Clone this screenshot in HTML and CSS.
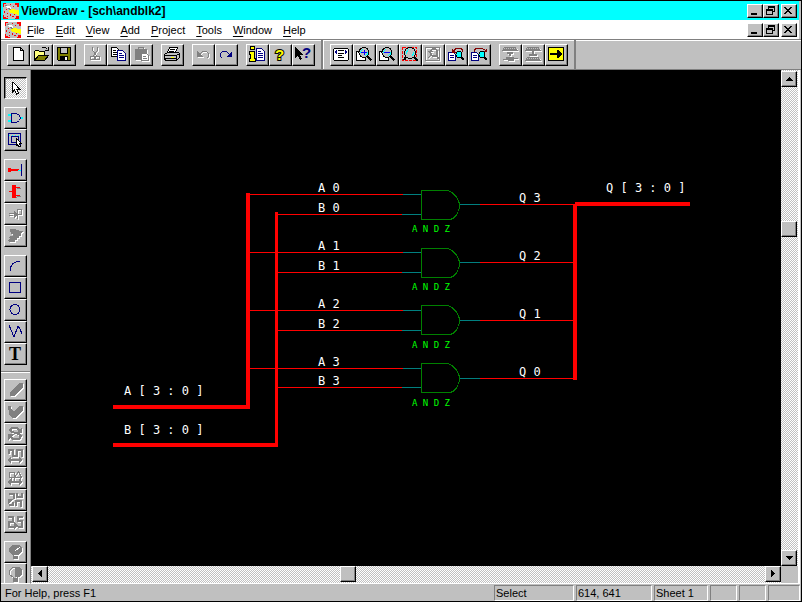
FILE: index.html
```
<!DOCTYPE html>
<html lang="en">
<head>
<meta charset="utf-8">
<title>ViewDraw - [sch\andblk2]</title>
<link rel="stylesheet" href="styles.css">
</head>
<body>
<svg class="defs" aria-hidden="true">
  <symbol id="logo" viewBox="0 0 16 16">
    <path fill="#c0c0c0" d="M0 0h16v16H0z"/>
    <path fill="#f00" d="M12 0h4v4h-2V2h-2zM0 0h3v1H1v3H0zM7 1h1v1H7zM10 3h1v1h-1zM3 6h1v1H3zM1 8h1v2H1zM0 12h1v2h2v1h2v1H0zM4 10h1v1H4zM7 11h1v2H7zM9 13h2v1H9zM13 13h3v3h-4v-1h1zM4 13h1v1H4zM11 11h1v1h-1z"/>
    <path fill="#fff" d="M3 3h3l2 2-1 1-3-1z"/>
    <path fill="#ff0" d="M6 7l2-1 8 1v5l-5-1-5-2z"/>
    <path fill="#808080" d="M5 5h2v1h1v1H6zM2 2h2v1H2z"/>
  </symbol>
  <symbol id="lens" viewBox="0 0 20 20">
    <path fill="#fff" stroke="#000" d="M2.500 6.500h9v9h-9z"/>
    <circle cx="10" cy="7.500" r="5" fill="#c0c0c0" stroke="#000"/>
    <path stroke="#0ff" fill="none" d="M6.500 8V6.500L9 4M13.500 7v2L11 11"/>
    <path stroke="#000" stroke-width="2" d="M13.500 11.500l4 4"/>
  </symbol>
  <symbol id="sheetzoom" viewBox="0 0 20 20">
    <path fill="#fff" stroke="#000080" d="M2.500 7.500h5l2 2v6h-7z"/>
    <path stroke="#000080" d="M4 10.500h4M4 12.500h4"/>
    <circle cx="13" cy="9.500" r="3" fill="#0ff" stroke="#000"/>
    <path stroke="#000" stroke-width="2" d="M15 12l3 3"/>
  </symbol>
  <symbol id="minimize" viewBox="0 0 12 11"><path d="M3 8h6v2H3z"/></symbol>
  <symbol id="restore" viewBox="0 0 12 11"><path fill-rule="evenodd" d="M4 1h7v6H9v3H2V4h2zM5 3v1h4v2h1V3zM3 6v3h5V6z"/></symbol>
  <symbol id="close" viewBox="0 0 12 11"><path d="M2 2h2v1h1v1h2V3h1V2h2v1H9v1H8v1H7v1h1v1h1v1h1v1H8V8H7V7H5v1H4v1H2V8h1V7h1V6h1V5H4V4H3V3H2z"/></symbol>
  <symbol id="gate" viewBox="0 0 60 40">
    <path fill="none" stroke="#008000" d="M26 .500H.500v29H27M25 .500h2l4 2 4 4 2.500 4 1 4v3l-1 4-2.500 4-3 3-3 1h-2"/>
  </symbol>
</svg>

<main class="window">
  <header class="titlebar">
    <svg class="logo"><use href="#logo"/></svg>
    <h1>ViewDraw - [sch\andblk2]</h1>
    <div class="controls">
      <button aria-label="Minimize"><svg><use href="#minimize"/></svg></button>
      <button aria-label="Restore"><svg><use href="#restore"/></svg></button>
      <button aria-label="Close"><svg><use href="#close"/></svg></button>
    </div>
  </header>

  <nav class="menubar">
    <svg class="logo"><use href="#logo"/></svg>
    <button><u>F</u>ile</button>
    <button><u>E</u>dit</button>
    <button><u>V</u>iew</button>
    <button><u>A</u>dd</button>
    <button><u>P</u>roject</button>
    <button><u>T</u>ools</button>
    <button><u>W</u>indow</button>
    <button><u>H</u>elp</button>
    <div class="controls">
      <button aria-label="Minimize sheet"><svg><use href="#minimize"/></svg></button>
      <button aria-label="Restore sheet"><svg><use href="#restore"/></svg></button>
      <button aria-label="Close sheet"><svg><use href="#close"/></svg></button>
    </div>
  </nav>

  <div class="toolbars">
    <div class="toolbar">
      <div class="group">
        <button class="tool" aria-label="New"><svg viewBox="0 0 20 20"><path fill="#fff" stroke="#000" d="M5.500 2.500h7l3 3v10h-10zM12.500 2.500v3h3"/></svg></button>
        <button class="tool" aria-label="Open"><svg viewBox="0 0 20 20"><path fill="#ffff80" stroke="#000" d="M3.500 15.500v-9l1-1h3l1 1h5v4"/><path fill="#808000" stroke="#000" d="M3.500 15.500l4-5h10l-4 5z"/><path fill="none" stroke="#000" d="M10.500 3.500l1-1h3l2 2M17.500 2v3.500H14"/></svg></button>
        <button class="tool" aria-label="Save"><svg viewBox="0 0 20 20"><path fill="#808000" stroke="#000" d="M3.500 2.500h13v13h-12l-1-1z"/><path fill="#c0c0c0" stroke="#000" d="M6.500 2.500h7v6h-7z"/><path d="M6 11h8v5H6z"/><path fill="#fff" d="M11 12h2v3h-2z"/></svg></button>
      </div>
      <div class="group">
        <button class="tool" aria-label="Cut" disabled><svg viewBox="0 0 20 20"><path fill="none" stroke="#808080" d="M7.500 2v3l4 6M12.500 2v3l-4 6"/><circle cx="7.500" cy="13" r="2" fill="none" stroke="#808080"/><circle cx="12.500" cy="13" r="2" fill="none" stroke="#808080"/></svg></button>
        <button class="tool" aria-label="Copy"><svg viewBox="0 0 20 20"><path fill="#fff" stroke="#000" d="M3.500 2.500h5l2 2v7h-7z"/><path stroke="#000" d="M5 5.500h3M5 7.500h4M5 9.500h4"/><path fill="#fff" stroke="#000080" d="M9.500 5.500h5l3 3v7h-8z"/><path stroke="#000080" d="M11 8.500h3M11 10.500h5M11 12.500h5"/></svg></button>
        <button class="tool" aria-label="Paste" disabled><svg viewBox="0 0 20 20"><path fill="#808080" d="M4 4h3V2h6v2h3v4h-6v7H4z"/><path fill="#c0c0c0" d="M8 3h4v1H8z"/><path fill="#fff" stroke="#808080" d="M10.500 8.500h5l2 2v5h-7z"/><path stroke="#808080" d="M12 11.500h3M12 13.500h4"/></svg></button>
      </div>
      <div class="group">
        <button class="tool" aria-label="Print"><svg viewBox="0 0 20 20"><path fill="#fff" stroke="#000" d="M7.500 2.500h8l-2 5h-8z"/><path stroke="#000" d="M8 4.500h5M7 6.500h5"/><path fill="#c0c0c0" stroke="#000" d="M2.500 9.500l3-2h11l1 1v4l-3 3h-11l-1-2z"/><path stroke="#000" d="M3 10.500h12M3 13.500h12M14.500 10v5M15 9.500h2"/><path stroke="#ff0" d="M9 12h3"/></svg></button>
      </div>
      <div class="group">
        <button class="tool" aria-label="Undo" disabled><svg viewBox="0 0 20 20"><path fill="none" stroke="#808080" d="M6.500 9.500l3-3h4l2 2v3l-2 2"/><path fill="#808080" d="M4 6v6h6z"/></svg></button>
        <button class="tool" aria-label="Redo"><svg viewBox="0 0 20 20"><path fill="none" stroke="#000080" d="M13.500 9.500l-3-3h-4l-2 2v3l2 2"/><path fill="#000080" d="M16 6v6h-6z"/></svg></button>
      </div>
      <div class="group">
        <button class="tool" aria-label="Properties"><svg viewBox="0 0 20 20"><path fill="#ff0" stroke="#000" d="M3.500 1.500h4v3h-4zM2.500 6.500h5v7h1v3h-6v-3h1v-4h-1z"/><path fill="#fff" stroke="#000080" d="M9.500 3.500h5l3 3v9h-8z"/><path stroke="#000080" d="M11 6.500h3M11 8.500h5M11 10.500h5M11 12.500h5"/></svg></button>
        <button class="tool" aria-label="Help"><svg viewBox="0 0 20 20"><text class="mark yellow" x="5" y="15">?</text></svg></button>
        <button class="tool" aria-label="Context help"><svg viewBox="0 0 20 20"><path d="M2 2l8 8H7l2 4-2 1-2-4-3 2z"/><text class="mark navy" x="9" y="13">?</text></svg></button>
      </div>
    </div>

    <div class="toolbar">
      <div class="group">
        <button class="tool" aria-label="Full sheet"><svg viewBox="0 0 20 20"><path fill="#fff" stroke="#000" d="M3.500 3.500h13l1 1v10l-1 1h-13l-1-1v-10z"/><path stroke="#000" d="M7 5.500h6M7 8.500h6M7 10.500h4M7 12.500h6"/><path fill="#000080" d="M3 7l3-2v4zM17 7l-3-2v4z"/></svg></button>
        <button class="tool" aria-label="Zoom in"><svg viewBox="0 0 20 20"><use href="#lens"/><path stroke="#00f" d="M7 7.500h6M10 5v5"/></svg></button>
        <button class="tool" aria-label="Zoom out"><svg viewBox="0 0 20 20"><use href="#lens"/><path stroke="#00f" d="M7 7.500h6"/></svg></button>
        <button class="tool" aria-label="Zoom area"><svg viewBox="0 0 20 20"><path fill="none" stroke="#f00" stroke-dasharray="3 1" d="M2.500 2.500h14v13h-14z"/><circle cx="10" cy="8" r="5.500" fill="#c0c0c0" stroke="#000"/><path fill="none" stroke="#0ff" d="M6.500 9V7l2-2.500M13.500 7v2l-2 2.500"/><path stroke="#000" stroke-width="2" d="M14 12l4 4M6 12l-2 3"/></svg></button>
        <button class="tool" aria-label="Zoom selection" disabled><svg viewBox="0 0 20 20"><path fill="none" stroke="#808080" d="M2.500 2.500h14v13h-14zM5 13l4-4M5 6h5"/><circle cx="11" cy="7.500" r="3.500" fill="none" stroke="#808080" stroke-width="2"/><path stroke="#808080" stroke-width="2" d="M13 10l3 4"/></svg></button>
        <button class="tool" aria-label="Previous zoom"><svg viewBox="0 0 20 20"><use href="#sheetzoom"/><path fill="none" stroke="#800000" d="M16.500 7V5l-2-2h-4l-3 3"/><path fill="#800000" d="M6 4v4h4z"/></svg></button>
        <button class="tool" aria-label="Next zoom"><svg viewBox="0 0 20 20"><use href="#sheetzoom"/><path fill="none" stroke="#800000" d="M5.500 7V5l2-2h5l3 2"/><path fill="#800000" d="M18 3v4h-4z"/></svg></button>
      </div>
      <div class="group">
        <button class="tool" aria-label="Push" disabled><svg viewBox="0 0 20 20"><path fill="#808080" d="M4 2h12l2 4H2zM7 7h6v2h-2v2H9V9H7zM6 12h8v1h4v1h-4v2H8v-1H3v-1h3z"/><path stroke="#c0c0c0" stroke-dasharray="1 1" d="M4 3.500h13"/></svg></button>
        <button class="tool" aria-label="Pop" disabled><svg viewBox="0 0 20 20"><path fill="#808080" d="M4 2h12l2 4H2zM9 6h2v3h3v2H6V9h3zM4 12h12l2 4H2z"/><path stroke="#c0c0c0" stroke-dasharray="1 1" d="M4 3.500h13M4 13.500h13"/></svg></button>
        <button class="tool" aria-label="Next sheet"><svg viewBox="0 0 20 20"><path fill="#ff0" stroke="#000" d="M2.500 2.500h15v13h-15z"/><path d="M4 8h7V5h1l4 4-4 4h-1v-3H4z"/></svg></button>
      </div>
    </div>
  </div>

  <div class="workspace">
    <aside class="sidebar">
      <div class="palette">
        <div class="group">
          <button class="tool pressed" aria-label="Select"><svg viewBox="0 0 20 20"><path fill="#fff" stroke="#000" d="M8.500 4.500l6 6.500h-3l2 4-2 1-2-4-2 2v-9.500z"/></svg></button>
        </div>
        <div class="group">
          <button class="tool" aria-label="Component"><svg viewBox="0 0 20 20"><path stroke="#0ff" stroke-width="2" d="M3 7h4M3 13h4M15 10h3"/><path fill="none" stroke="#000080" d="M6.500 5.500h5l3 2 1 2.500-1 2.500-3 2h-5z"/></svg></button>
          <button class="tool" aria-label="Block"><svg viewBox="0 0 20 20"><path fill="none" stroke="#000080" d="M3.500 3.500h12v11h-12zM6.500 6.500h7v6h-7z"/><path stroke="#0ff" stroke-dasharray="1 2" d="M4 5.500h10"/><path fill="#fff" stroke="#000" d="M11.500 8.500l5 5h-2l1 3h-2l-1-2-1 1z"/></svg></button>
        </div>
        <div class="group">
          <button class="tool" aria-label="Net"><svg viewBox="0 0 20 20"><path fill="#f00" d="M3 8h3v1h8v2H6v1H3z"/><path stroke="#0ff" d="M13 10.500h3"/><path stroke="#000080" d="M16.500 4v12"/></svg></button>
          <button class="tool" aria-label="Bus"><svg viewBox="0 0 20 20"><path fill="#f00" d="M7 3h4v2h4v1h-4v7h4v1h-4v2H7v-6H4V9h3z"/><path stroke="#808080" d="M12 6.500h4M12 14.500h4M11.500 15v1"/></svg></button>
          <button class="tool" aria-label="Break net" disabled><svg viewBox="0 0 20 20"><path fill="none" stroke="#808080" d="M4 9.500h5M4 11.500h4M12.500 5v10M12.500 5.500h4v5h-4"/><path fill="#808080" d="M9 7l4 3-4 4z"/></svg></button>
          <button class="tool" aria-label="Rip bus" disabled><svg viewBox="0 0 20 20"><path fill="#808080" d="M5 3h6v1h3v1h4l-2 2v3h-2v2h-2v2h-2v2H4l-1-2 2-2H3l2-2h3V8H5l2-1-2-1z"/></svg></button>
        </div>
        <div class="group">
          <button class="tool" aria-label="Arc"><svg viewBox="0 0 20 20"><path class="navy-line" d="M5 15q0-9 10-10"/></svg></button>
          <button class="tool" aria-label="Box"><svg viewBox="0 0 20 20"><path class="navy-line" d="M4.500 4.500h11v10h-11z"/></svg></button>
          <button class="tool" aria-label="Circle"><svg viewBox="0 0 20 20"><circle class="navy-line" cx="10" cy="9.500" r="5"/></svg></button>
          <button class="tool" aria-label="Line"><svg viewBox="0 0 20 20"><path class="navy-line" d="M4 3l5 12 4-11 2 3 2 5"/></svg></button>
          <button class="tool" aria-label="Text"><svg viewBox="0 0 20 20"><text class="letter" x="4" y="16">T</text></svg></button>
        </div>
      </div>
      <div class="palette">
        <div class="group">
          <button class="tool" aria-label="Edit color" disabled><svg viewBox="0 0 20 20"><path fill="#808080" d="M15 3h3v4l-9 9H5v-4z"/></svg></button>
          <button class="tool" aria-label="Edit style" disabled><svg viewBox="0 0 20 20"><path fill="#808080" d="M3 4h3v3l3 2 6-5h3v4l-8 8H7l-3-3V8H3z"/></svg></button>
          <button class="tool" aria-label="Rotate" disabled><svg viewBox="0 0 20 20"><path fill="none" stroke="#808080" stroke-width="2" d="M15 7l-3-3H7L5 6l2 2 7 2 2 2-2 3H8l-3-3"/><path fill="#808080" d="M3 10h6l-6 6zM17 3v6h-6z"/></svg></button>
          <button class="tool" aria-label="Stretch" disabled><svg viewBox="0 0 20 20"><path fill="none" stroke="#808080" stroke-width="2" d="M4 8V4h4v6h4V4h5v7"/><path fill="#808080" d="M2 14l4-3v2h8v-2l4 3-4 3v-2H6v2z"/></svg></button>
          <button class="tool" aria-label="Scale" disabled><svg viewBox="0 0 20 20"><circle cx="7" cy="7" r="3" fill="none" stroke="#808080"/><path fill="none" stroke="#808080" d="M9.500 9.500l4-6 3 6zM6.500 10v4M9.500 9v4h6v-4"/><path fill="#808080" d="M2 14l4-3v2h8v-2l4 3-4 3v-2H6v2z"/></svg></button>
          <button class="tool" aria-label="Reflect" disabled><svg viewBox="0 0 20 20"><path fill="none" stroke="#808080" stroke-width="2" d="M4 4h5v5M12 3v4h5V3M4 15h4v-3M11 16v-5h5v6"/><path fill="#808080" d="M3 9h6l-6 5z"/></svg></button>
          <button class="tool" aria-label="Mirror" disabled><svg viewBox="0 0 20 20"><path fill="none" stroke="#808080" stroke-width="2" d="M3 5h5v5H4v5h6M18 5h-5v4h4v6h-4"/><path fill="#808080" d="M9 10l5 4-5 3z"/></svg></button>
        </div>
        <div class="group">
          <button class="tool" aria-label="Highlight on" disabled><svg viewBox="0 0 20 20"><path fill="#808080" d="M7 3h7l3 3v4l-4 3v4H8v-4L4 10V6z"/><path stroke="#fff" d="M10 9l5-4M9 13.500h4"/></svg></button>
          <button class="tool" aria-label="Highlight off" disabled><svg viewBox="0 0 20 20"><path fill="none" stroke="#808080" d="M7.500 3.500h6l3 3v4l-4 3v4h-4v-4l-4-3v-4z"/><path fill="#808080" d="M10 3h4l3 3v4l-4 3h-3zM8 14h5v4H8z"/></svg></button>
        </div>
      </div>
    </aside>

    <section class="sheet">
      <svg class="canvas" role="img" aria-label="andblk2 schematic">
        <g transform="translate(-31 -70)">
          <g fill="none" stroke="#f00">
            <path d="M250 194.500h153M278 214.500h124M250 252.500h153M278 272.500h124M250 310.500h153M278 330.500h124M250 368.500h153M278 387.500h124"/>
            <path d="M480 204.500h95M480 262.500h95M480 320.500h95M480 378.500h95"/>
            <path stroke-width="4" d="M113 407h137M248 409V193M575 380V204M575 204h115"/>
            <path stroke-width="3" d="M276.500 447V212"/>
            <path stroke-width="4" d="M113 445h165"/>
          </g>
          <path stroke="#008080" d="M403 194.500h18M402 214.500h19M403 252.500h18M402 272.500h19M403 310.500h18M402 330.500h19M403 368.500h18M402 387.500h19M460 204.500h20M460 262.500h20M460 320.500h20M460 378.500h20"/>
          <use href="#gate" x="421" y="190" width="60" height="40"/>
          <use href="#gate" x="421" y="248" width="60" height="40"/>
          <use href="#gate" x="421" y="305" width="60" height="40"/>
          <use href="#gate" x="421" y="363" width="60" height="40"/>
          <g class="label">
            <text x="318" y="192">A 0</text><text x="318" y="212">B 0</text>
            <text x="318" y="250">A 1</text><text x="318" y="270">B 1</text>
            <text x="318" y="308">A 2</text><text x="318" y="328">B 2</text>
            <text x="318" y="366">A 3</text><text x="318" y="385">B 3</text>
            <text x="519" y="202">Q 3</text><text x="519" y="260">Q 2</text>
            <text x="519" y="318">Q 1</text><text x="519" y="376">Q 0</text>
            <text x="606" y="192">Q [ 3 : 0 ]</text>
            <text x="124" y="395">A [ 3 : 0 ]</text>
            <text x="124" y="434">B [ 3 : 0 ]</text>
          </g>
          <g class="part">
            <text x="412" y="232">A N D Z</text><text x="412" y="290">A N D Z</text>
            <text x="412" y="348">A N D Z</text><text x="412" y="406">A N D Z</text>
          </g>
        </g>
      </svg>
      <div class="scroll vertical">
        <button aria-label="Scroll up"><svg viewBox="0 0 14 14"><path d="M7 5h1v1h1v1h1v1h1v1H4V8h1V7h1V6h1z"/></svg></button>
        <span class="before"></span><span class="thumb"></span><span class="after"></span>
        <button aria-label="Scroll down"><svg viewBox="0 0 14 14"><path d="M4 5h7v1h-1v1H9v1H8v1H7V8H6V7H5V6H4z"/></svg></button>
      </div>
      <div class="scroll horizontal">
        <button aria-label="Scroll left"><svg viewBox="0 0 14 14"><path d="M8 3h1v7H8V9H7V8H6V7H5V6h1V5h1V4h1z"/></svg></button>
        <span class="before"></span><span class="thumb"></span><span class="after"></span>
        <button aria-label="Scroll right"><svg viewBox="0 0 14 14"><path d="M5 3h1v1h1v1h1v1h1v1H8v1H7v1H6v1H5z"/></svg></button>
      </div>
    </section>
  </div>

  <footer class="status">
    <span class="hint">For Help, press F1</span>
    <span class="pane mode">Select</span>
    <span class="pane position">614, 641</span>
    <span class="pane page">Sheet 1</span>
    <span class="pane small"></span>
    <span class="pane small"></span>
    <span class="pane last"></span>
  </footer>
</main>
</body>
</html>
```
FILE: styles.css
```
* { box-sizing: border-box; }

body {
  margin: 0;
  background: #000;
  color: #000;
  font: 11px/14px "Liberation Sans", Arial, sans-serif;
}

button {
  margin: 0;
  padding: 0;
  border: 0;
  border-radius: 0;
  color: inherit;
  font: inherit;
}

svg { display: block; shape-rendering: crispEdges; }
.defs { position: absolute; width: 0; height: 0; }

.window {
  display: flex;
  flex-direction: column;
  height: 100vh;
  border: 1px solid #000;
  background: #c0c0c0;
}

/* Title and menu */
.titlebar, .menubar {
  display: flex;
  align-items: center;
  flex: none;
  height: 19px;
  margin-right: 2px;
}
.titlebar { padding: 0 2px; background: #0ff; }
.menubar { gap: 1px; padding: 0 2px 0 4px; background: #fff; }
.logo { width: 16px; height: 16px; flex: none; }
h1 { margin: 0 0 0 2px; font-size: 12px; line-height: 16px; }
.menubar > button { padding: 0 5px; background: none; line-height: 16px; }
.menubar u { text-underline-offset: 2px; }

.controls { display: flex; margin-left: auto; }
.controls button {
  width: 16px;
  height: 14px;
  border: 1px solid;
  border-color: #fff #000 #000 #fff;
  background: #c0c0c0;
  box-shadow: inset -1px -1px #808080;
}
.controls button:last-child { margin-left: 2px; }
.controls svg { width: 12px; height: 11px; }

/* Tool bars */
.toolbars {
  display: flex;
  flex: none;
  height: 31px;
  border-top: 1px solid #808080;
  border-bottom: 1px solid #808080;
  box-shadow: inset 0 1px #fff;
}
.toolbar {
  display: flex;
  gap: 8px;
  padding: 4px 6px 0;
  border-right: 2px solid #808080;
  box-shadow: inset 0 1px #fff;
}
.toolbar + .toolbar { border-left: 1px solid #fff; }
.toolbar .group { display: flex; }

.tool {
  display: block;
  width: 23px;
  height: 22px;
  border: 1px solid;
  border-color: #fff #000 #000 #fff;
  background: #c0c0c0;
  box-shadow: inset -1px -1px #808080;
}
.tool svg { width: 20px; height: 20px; }
.tool:disabled svg { filter: drop-shadow(1px 1px 0 #fff); }
.tool.pressed {
  border-color: #000 #fff #fff #000;
  background: repeating-conic-gradient(#fff 0 25%, #c0c0c0 0 50%) 0 0 / 2px 2px;
  box-shadow: inset 1px 1px #808080;
}

.mark { font: bold 15px "Liberation Sans", Arial, sans-serif; }
.yellow { fill: #ff0; stroke: #000; paint-order: stroke; stroke-width: 2px; }
.navy { fill: #000080; }
.letter { font: bold 18px "Liberation Serif", serif; }
.navy-line { fill: none; stroke: #000080; }

/* Workspace */
.workspace { display: flex; flex: 1; min-height: 0; }
.sidebar {
  flex: none;
  width: 30px;
  overflow: hidden;
  border-right: 1px solid #808080;
  border-bottom: 1px solid #fff;
}
.palette {
  display: flex;
  flex-direction: column;
  gap: 8px;
  padding: 7px 3px 6px;
}
.palette + .palette {
  border-top: 1px solid #808080;
  box-shadow: inset 0 1px #fff;
}

.sheet {
  display: grid;
  flex: 1;
  grid-template: minmax(0, 1fr) 17px / minmax(0, 1fr) 17px;
  min-width: 0;
  margin-right: 1px;
  border-right: 2px solid #fff;
  border-bottom: 1px solid #fff;
}
.canvas { width: 100%; height: 100%; background: #000; }
.label text { fill: #fff; font: 12px "DejaVu Sans Mono", monospace; }
.part text { fill: #0f0; font: 9px "DejaVu Sans Mono", monospace; }

.scroll {
  display: flex;
  background: repeating-conic-gradient(#fff 0 25%, #c0c0c0 0 50%) 0 0 / 2px 2px;
}
.vertical { flex-direction: column; padding-top: 1px; }
.horizontal { padding-left: 1px; }
.scroll button, .thumb {
  flex: none;
  width: 16px;
  height: 16px;
  border: 1px solid;
  border-color: #fff #000 #000 #fff;
  background: #c0c0c0;
  box-shadow: inset -1px -1px #808080;
}
.scroll svg { width: 14px; height: 14px; }
.vertical .before { flex: 134; }
.vertical .after { flex: 312; }
.horizontal .before { flex: 292; }
.horizontal .after { flex: 410; }

/* Status bar */
.status {
  display: flex;
  flex: none;
  gap: 2px;
  height: 17px;
  padding: 1px 1px 0 4px;
}
.status span { line-height: 16px; }
.hint { flex: 1; }
.pane {
  width: 27px;
  padding-left: 1px;
  border: 1px solid;
  border-color: #808080 #fff #fff #808080;
}
.status .pane { line-height: 15px; }
.mode { width: 80px; }
.position { width: 76px; }
.page { width: 54px; }
.last { width: 32px; }
```
